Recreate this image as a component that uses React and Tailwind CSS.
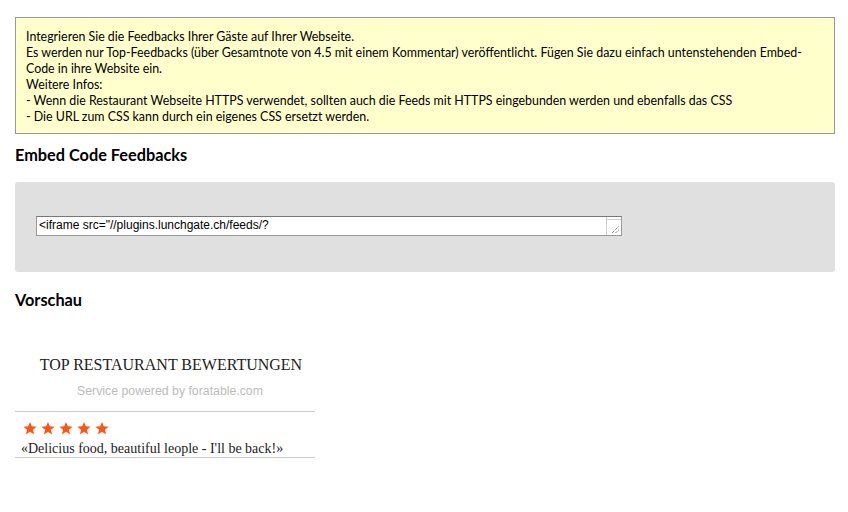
import React from "react";

function Star() {
  return (
    <svg width="14" height="14" viewBox="0 0 24 24">
      <path d="M12 1.5l3.1 7.6 8.2.6-6.3 5.3 2 8-7-4.4-7 4.4 2-8L.7 9.7l8.2-.6z" fill="#ff5511" />
    </svg>
  );
}

export default function App() {
  return (
    <div className="w-[848px] h-[512px] bg-white px-[15px] pt-[17px] text-black" style={{ fontFamily: "Lato, 'Open Sans', sans-serif" }}>
      <div className="w-[820px] border border-[#999] bg-[#ffffcc] pl-[10px] pt-[11px] pb-[8px] text-[12.4px] leading-[16px]">
        <div className="whitespace-nowrap">Integrieren Sie die Feedbacks Ihrer Gäste auf Ihrer Webseite.</div>
        <div className="whitespace-nowrap">Es werden nur Top-Feedbacks (über Gesamtnote von 4.5 mit einem Kommentar) veröffentlicht. Fügen Sie dazu einfach untenstehenden Embed-</div>
        <div className="whitespace-nowrap">Code in ihre Website ein.</div>
        <div className="whitespace-nowrap">Weitere Infos:</div>
        <div className="whitespace-nowrap">- Wenn die Restaurant Webseite HTTPS verwendet, sollten auch die Feeds mit HTTPS eingebunden werden und ebenfalls das CSS</div>
        <div className="whitespace-nowrap">- Die URL zum CSS kann durch ein eigenes CSS ersetzt werden.</div>
      </div>

      <h2 className="mt-[11px] text-[16.3px] leading-[20px] font-bold">Embed Code Feedbacks</h2>

      <div className="mt-[17px] w-[820px] h-[90px] rounded-[3px] bg-[#e0e0e0] pl-[21px] pt-[34px]">
        <div className="flex w-[586px] h-[20px] border border-[#999] border-t-[#777] bg-white">
          <div className="flex-1 pl-[2px] text-[12px] leading-[17px] text-black whitespace-nowrap" style={{ fontFamily: "'Liberation Sans', Arial, sans-serif" }}>
            &lt;iframe src="//plugins.lunchgate.ch/feeds/?
          </div>
          <div className="w-[15px] h-full border-l border-[#ccc] flex flex-col">
            <div className="h-[3px] border-b border-[#ccc]"></div>
            <div className="flex-1 flex items-end justify-end pr-[1px] pb-[1px]">
              <svg width="9" height="9" viewBox="0 0 9 9">
                <path d="M1 8L8 1M4.5 8L8 4.5" stroke="#555" strokeWidth="1" strokeDasharray="1 1" />
              </svg>
            </div>
          </div>
        </div>
      </div>

      <h2 className="mt-[18px] text-[16.3px] leading-[20px] font-bold">Vorschau</h2>

      <div className="mt-[45px] w-[300px]" style={{ fontFamily: "'Liberation Serif', 'DejaVu Serif', serif" }}>
        <div className="pl-[12px] text-center text-[16px] leading-[20px] text-[#222]">TOP RESTAURANT BEWERTUNGEN</div>
        <div className="mt-[8px] pl-[10px] text-center text-[12.3px] leading-[16px] text-[#bbb]" style={{ fontFamily: "'Liberation Sans', Arial, sans-serif" }}>
          Service powered by foratable.com
        </div>
        <div className="mt-[12px] border-t border-[#ccc]"></div>
        <div className="mt-[9px] pl-[8px] flex gap-[4px]">
          <Star /><Star /><Star /><Star /><Star />
        </div>
        <div className="mt-[5px] pl-[6px] text-[14px] leading-[17px] text-[#222] border-b border-[#ccc]">
          «Delicius food, beautiful leople - I'll be back!»
        </div>
      </div>
    </div>
  );
}
